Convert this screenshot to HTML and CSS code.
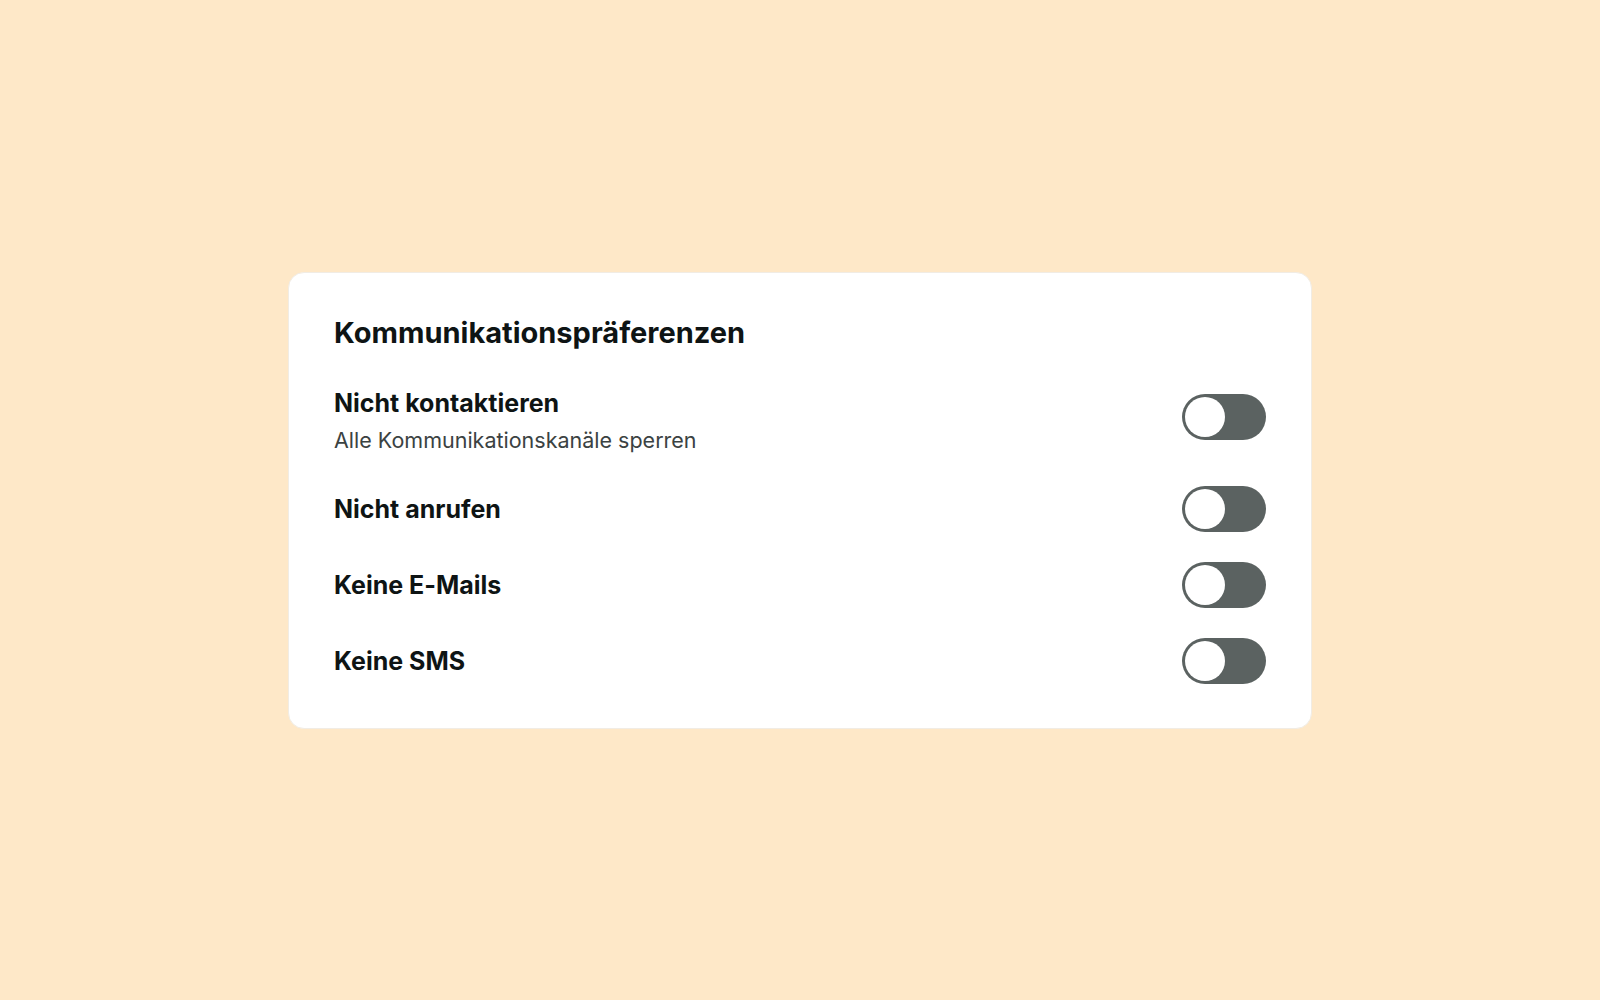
FILE: index.html
```html
<!DOCTYPE html>
<html lang="de">
<head>
    <meta charset="UTF-8">
    <meta name="viewport" content="width=device-width, initial-scale=1.0">
    <title>Kommunikationspräferenzen</title>
    <link rel="stylesheet" href="styles.css">
</head>
<body>
    <div class="card">
        <h2 class="card-title">Kommunikationspräferenzen</h2>

        <div class="pref-list">
            <div class="pref-row pref-row-main">
                <div class="pref-text">
                    <div class="pref-label">Nicht kontaktieren</div>
                    <div class="pref-hint">Alle Kommunikationskanäle sperren</div>
                </div>
                <label class="switch">
                    <input type="checkbox">
                    <span class="slider"></span>
                </label>
            </div>

            <div class="pref-row">
                <div class="pref-label">Nicht anrufen</div>
                <label class="switch">
                    <input type="checkbox">
                    <span class="slider"></span>
                </label>
            </div>

            <div class="pref-row">
                <div class="pref-label">Keine E-Mails</div>
                <label class="switch">
                    <input type="checkbox">
                    <span class="slider"></span>
                </label>
            </div>

            <div class="pref-row">
                <div class="pref-label">Keine SMS</div>
                <label class="switch">
                    <input type="checkbox">
                    <span class="slider"></span>
                </label>
            </div>
        </div>
    </div>
</body>
</html>
```

FILE: styles.css
```css
/* Resetting some defaults */
* {
    margin: 0;
    padding: 0;
    box-sizing: border-box;
}

body {
    font-family: 'Inter', 'Noto Sans', sans-serif;
    font-variant-ligatures: none;
    background: #fee8c8;
    color: #0e1414;
    height: 100vh;
    display: flex;
    justify-content: center;
    align-items: center;
}

/* Card */
.card {
    width: 1024px;
    background: #fff;
    border: 1px solid #f1ece4;
    border-radius: 16px;
    padding: 42px 45px 44px;
}

.card-title {
    font-size: 29px;
    font-weight: 700;
    line-height: 36px;
    margin-bottom: 36px;
}

/* Preference rows */
.pref-list {
    display: flex;
    flex-direction: column;
    gap: 30px;
}

.pref-row {
    display: flex;
    justify-content: space-between;
    align-items: center;
}

/* first row has a hint line, so the switch sits at the top */
.pref-row-main {
    align-items: flex-start;
}

.pref-row-main .switch {
    margin-top: 7px;
}

.pref-label {
    font-size: 25px;
    font-weight: 700;
    line-height: 32px;
}

.pref-hint {
    margin-top: 5px;
    font-size: 21.5px;
    line-height: 32px;
    color: #3b4242;
}

/* Toggle switch */
.switch {
    position: relative;
    display: inline-block;
    width: 84px;
    height: 46px;
    flex-shrink: 0;
}

.switch input {
    display: none;
}

.slider {
    position: absolute;
    inset: 0;
    background: #5b6261;
    border-radius: 23px;
    cursor: pointer;
    transition: all 0.3s ease;
}

.slider::before {
    content: "";
    position: absolute;
    top: 3px;
    left: 3px;
    width: 40px;
    height: 40px;
    border-radius: 50%;
    background: #fff;
    transition: all 0.3s ease;
}

.switch input:checked + .slider::before {
    transform: translateX(38px);
}
```
